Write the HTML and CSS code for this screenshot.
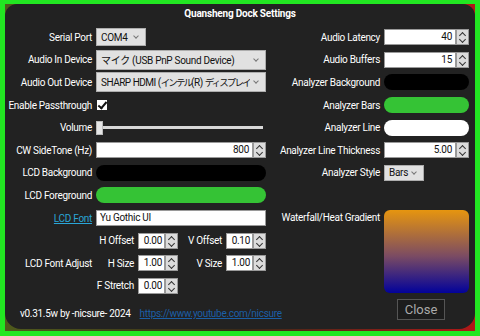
FILE: index.html
```html
<!DOCTYPE html>
<html>
<head>
<title>Quansheng Dock Settings</title>
<link rel="stylesheet" href="styles.css">
</head>
<body>

<div id="frame">
  <div id="window">
    <div class="title">Quansheng Dock Settings</div>

    <div class="main">
      <div class="left">
        <div class="lbl">Serial Port</div>
        <div class="ctl"><span class="combo combo-com">COM4</span></div>

        <div class="lbl">Audio In Device</div>
        <div class="ctl"><span class="combo combo-wide tall"><span class="combo-text">マイク (USB PnP Sound Device)</span></span></div>

        <div class="lbl">Audio Out Device</div>
        <div class="ctl"><span class="combo combo-wide tall"><span class="combo-text out-text">SHARP HDMI (<span class="jp">インテル</span>(R) <span class="jp">ディスプレイ</span></span></span></div>

        <div class="lbl">Enable Passthrough</div>
        <div class="ctl"><span class="check"></span></div>

        <div class="lbl">Volume</div>
        <div class="ctl slider"><span class="thumb"></span><span class="track"></span></div>

        <div class="lbl">CW SideTone (Hz)</div>
        <div class="ctl"><div class="num"><span class="val">800</span><span class="spin"></span></div></div>

        <div class="lbl">LCD Background</div>
        <div class="ctl"><div class="pill black"></div></div>

        <div class="lbl">LCD Foreground</div>
        <div class="ctl"><div class="pill green"></div></div>

        <div class="lbl"><a class="font-link" href="#">LCD Font</a></div>
        <div class="ctl"><div class="textbox">Yu Gothic UI</div></div>

        <div class="lbl adjust-lbl">LCD Font Adjust</div>
        <div class="adjust">
          <div class="lbl">H Offset</div>
          <div class="num small"><span class="val">0.00</span><span class="spin"></span></div>
          <div class="lbl">V Offset</div>
          <div class="num small"><span class="val">0.10</span><span class="spin"></span></div>

          <div class="lbl">H Size</div>
          <div class="num small"><span class="val">1.00</span><span class="spin"></span></div>
          <div class="lbl">V Size</div>
          <div class="num small"><span class="val">1.00</span><span class="spin"></span></div>

          <div class="lbl">F Stretch</div>
          <div class="num small"><span class="val">0.00</span><span class="spin"></span></div>
        </div>
      </div>

      <div class="right">
        <div class="lbl">Audio Latency</div>
        <div class="num"><span class="val">40</span><span class="spin"></span></div>

        <div class="lbl">Audio Buffers</div>
        <div class="num"><span class="val">15</span><span class="spin"></span></div>

        <div class="lbl">Analyzer Background</div>
        <div class="pill black"></div>

        <div class="lbl">Analyzer Bars</div>
        <div class="pill green"></div>

        <div class="lbl">Analyzer Line</div>
        <div class="pill white"></div>

        <div class="lbl">Analyzer Line Thickness</div>
        <div class="num"><span class="val">5.00</span><span class="spin"></span></div>

        <div class="lbl">Analyzer Style</div>
        <div class="ctl"><span class="combo combo-bars">Bars</span></div>

        <div class="lbl gradient-lbl">Waterfall/Heat Gradient</div>
        <div class="gradient"></div>
      </div>
    </div>

    <div class="footer">
      <span class="version">v0.31.5w by -nicsure- 2024</span>
      <a class="site" href="#">https://www.youtube.com/nicsure</a>
      <button class="close">Close</button>
    </div>
  </div>
</div>

</body>
</html>
```

FILE: styles.css
```css
body {
  margin: 0;
  background: #22e622;
  font-family: Roboto, 'Noto Sans CJK JP', sans-serif;
  font-size: 10px;
  letter-spacing: -0.3px;
  color: white;
}

#frame {
  margin: 4px 5px 0;
  width: 470px;
  height: 327px;
  background: linear-gradient(90deg, #4f5a1c, #3a2a18 50%, #b01818);
}

#window {
  height: 325px;
  background-color: #222;
  border-radius: 12px 12px 16px 16px;
}

.title {
  height: 22px;
  line-height: 20px;
  text-align: center;
  font-weight: bold;
  letter-spacing: -0.2px;
}

.main {
  display: flex;
}

.left, .right {
  display: grid;
  grid-auto-rows: 22.6px;
  align-items: center;
  column-gap: 4px;
}

.left {
  grid-template-columns: 87px 170px;
}

.right {
  margin-left: 4px;
  grid-template-columns: 110px 85px;
}

.lbl {
  display: flex;
  justify-content: flex-end;
  white-space: nowrap;
}

.ctl {
  display: flex;
  align-items: center;
}

/* combo boxes */
.combo {
  position: relative;
  display: flex;
  align-items: center;
  box-sizing: border-box;
  height: 18px;
  padding: 0 16px 0 4px;
  background-color: #e1e1e1;
  border: 1px solid #adadad;
  color: #111;
}

.combo::after {
  content: "";
  position: absolute;
  right: 7px;
  top: 5px;
  width: 3px;
  height: 3px;
  border-right: 1px solid #777;
  border-bottom: 1px solid #777;
  transform: rotate(45deg);
}

.combo.tall {
  height: 20px;
}

.combo-com {
  width: 50px;
}

.combo-bars {
  width: 40px;
  height: 16px;
}

.combo-bars::after {
  top: 4px;
}

.combo-wide {
  width: 170px;
  padding-right: 12px;
}

.combo-text {
  overflow: hidden;
  white-space: nowrap;
}

.out-text {
  letter-spacing: -0.5px;
}

.jp {
  font-size: 9.5px;
  letter-spacing: -1.9px;
}

.combo.tall::after {
  top: 6px;
}

/* checkbox */
.check {
  position: relative;
  margin-left: 1px;
  width: 10px;
  height: 10px;
  background-color: white;
}

.check::after {
  content: "";
  position: absolute;
  left: 3px;
  top: 0;
  width: 3px;
  height: 7px;
  border-right: 2px solid #111;
  border-bottom: 2px solid #111;
  transform: rotate(40deg);
}

/* slider */
.slider {
  height: 15px;
}

.thumb {
  width: 7px;
  height: 14px;
  background-color: #e6e6e6;
  border: 1px solid #bbb;
  box-sizing: border-box;
}

.track {
  width: 160px;
  height: 3px;
  background-color: #d8d8d8;
}

/* numeric inputs */
.num {
  display: flex;
  width: 100%;
  height: 16px;
}

.num .val {
  flex: 1;
  box-sizing: border-box;
  padding-right: 3px;
  background-color: white;
  border: 1px solid #9a9a9a;
  color: #111;
  text-align: right;
  line-height: 14px;
}

.spin {
  position: relative;
  width: 13px;
  box-sizing: border-box;
  background-color: #dcdcdc;
  border: 1px solid #999;
}

.spin::before, .spin::after {
  content: "";
  position: absolute;
  left: 3px;
  width: 4px;
  height: 4px;
  border-left: 1.5px solid #333;
  border-top: 1.5px solid #333;
}

.spin::before {
  top: 3px;
  transform: rotate(45deg);
}

.spin::after {
  top: 7px;
  transform: rotate(-135deg);
}

.pill {
  width: 100%;
  height: 16px;
  border-radius: 8px;
}

.pill.black {
  background-color: #000;
}

.pill.green {
  background-color: #35c335;
}

.pill.white {
  background-color: #fff;
}

.textbox {
  box-sizing: border-box;
  width: 100%;
  height: 16px;
  padding-left: 3px;
  background-color: white;
  border: 1px solid #9a9a9a;
  color: #111;
  line-height: 14px;
}

.font-link {
  color: #2aa6d8;
}

/* LCD font adjust block */
.adjust-lbl {
  grid-row: span 3;
}

.adjust {
  grid-row: span 3;
  display: grid;
  grid-template-columns: 42px 40px 40px 40px;
  grid-auto-rows: 22.6px;
  align-items: center;
  column-gap: 4px;
  margin-left: -4px;
}

.adjust .lbl:nth-child(3), .adjust .lbl:nth-child(7) {
  margin-left: -4px;
}

.num.small .val {
  padding-right: 2px;
}

/* waterfall */
.gradient-lbl {
  grid-row: 9 / span 4;
  align-self: start;
  line-height: 22.6px;
}

.gradient {
  grid-row: 9 / span 4;
  height: 83px;
  border-radius: 6px;
  background: linear-gradient(#e6950f, #7c4c62 55%, #02029a);
}

/* footer */
.footer {
  display: flex;
  align-items: flex-start;
  padding-left: 15px;
}

.version {
  margin-top: 10px;
  line-height: 14px;
}

.site {
  margin-top: 10px;
  margin-left: 9px;
  line-height: 14px;
  color: #1b5fa6;
}

.close {
  margin: 2px 30px 0 auto;
  width: 48px;
  height: 21px;
  padding: 0;
  background-color: #1c1c1c;
  border: 1px solid #555;
  color: #aaa;
  font-family: inherit;
  font-size: 13px;
  letter-spacing: 0;
}
```
